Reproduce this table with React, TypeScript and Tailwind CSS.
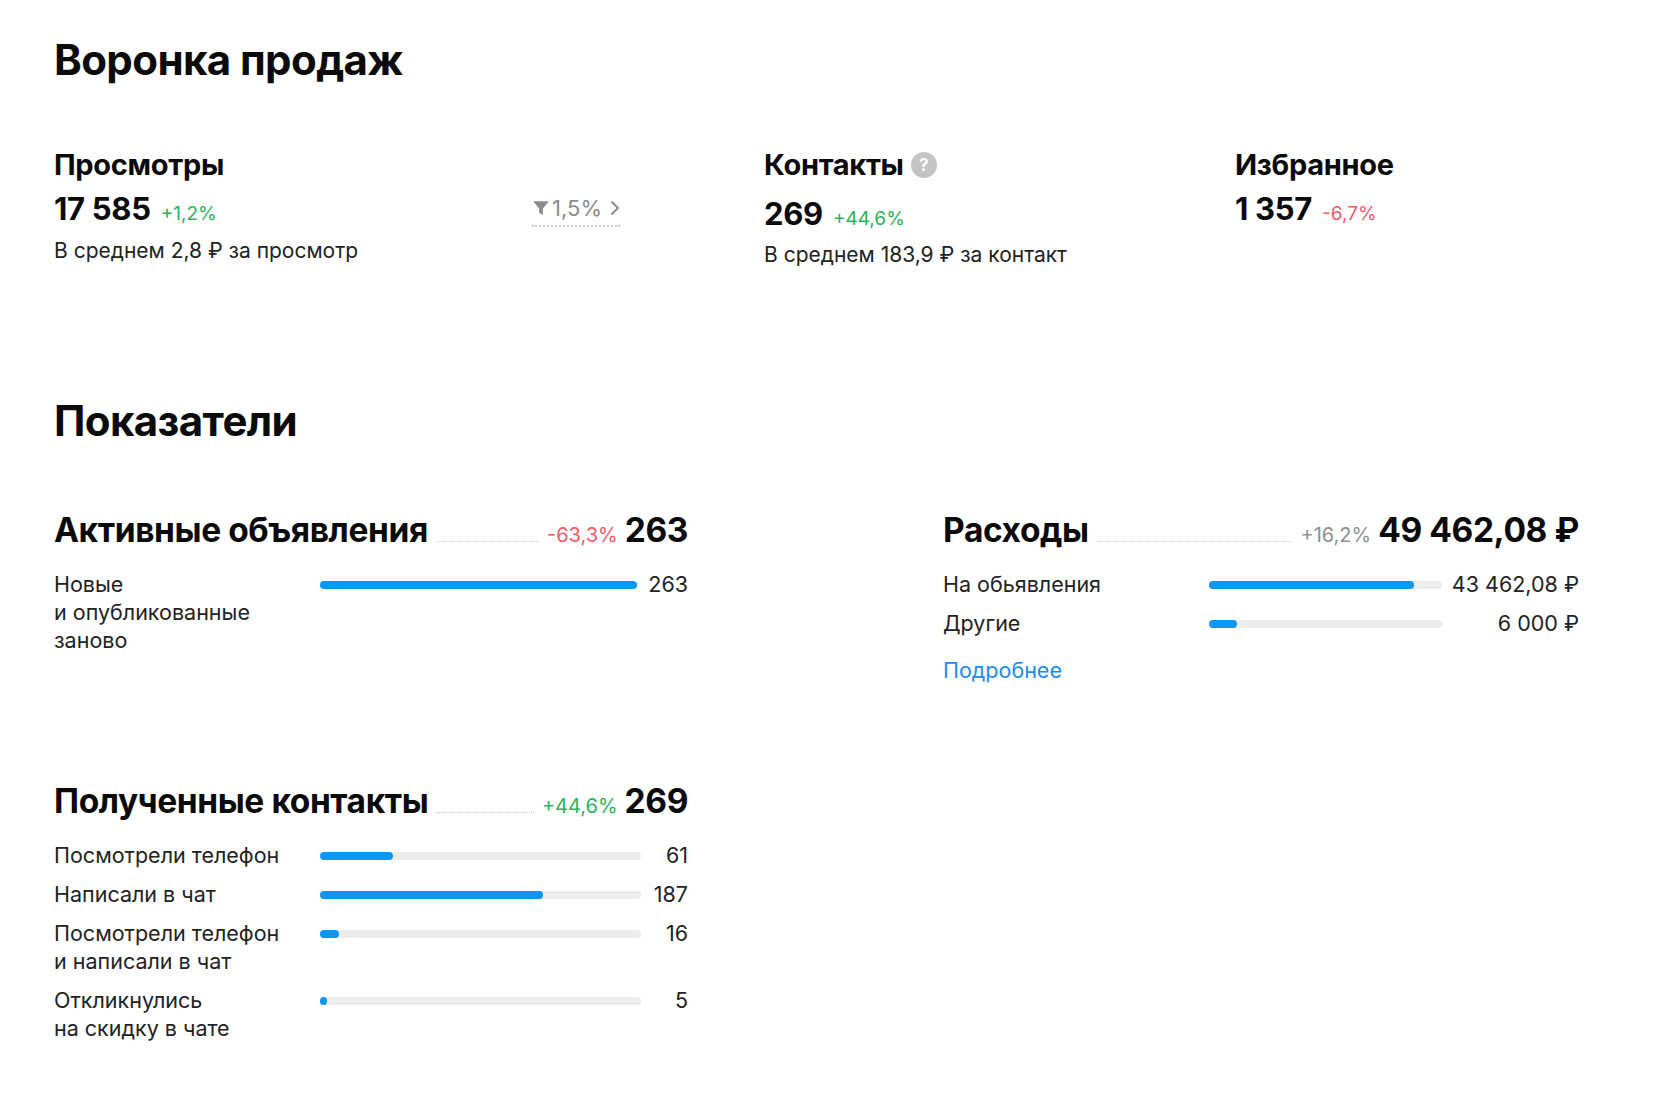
import type { ReactNode } from 'react';

const GREEN = 'text-[#2bb35c]';
const RED = 'text-[#f4596a]';

interface BarRow {
  label: ReactNode;
  value: string;
  percent: number;
}

interface BlockProps {
  title: string;
  delta: string;
  deltaClass: string;
  total: string;
  rows: BarRow[];
  valueWidth: string;
  footer?: ReactNode;
}

const FunnelIcon = () => (
  <svg viewBox="0 0 16 16" className="mr-[2px] h-[18px] w-[18px]" fill="#8c8c8c">
    <path d="M1 2h14L9.7 8.4v5.8L6.3 12.2V8.4z" />
  </svg>
);

const ChevronRight = () => (
  <svg viewBox="0 0 10 16" className="ml-[8px] h-[18px] w-[10px]" fill="none" stroke="#8c8c8c" strokeWidth="1.8" strokeLinecap="round" strokeLinejoin="round">
    <path d="M2 2l6 6-6 6" />
  </svg>
);

const HelpIcon = () => (
  <span className="ml-[7px] flex h-[26px] w-[26px] items-center justify-center rounded-full bg-[#c4c4c4] text-[17px] font-bold leading-none text-white">
    ?
  </span>
);

const Block = ({ title, delta, deltaClass, total, rows, valueWidth, footer }: BlockProps) => (
  <div>
    <div className="flex items-baseline">
      <h3 className="text-[33.5px] font-bold leading-[40px] tracking-[-0.4px]">{title}</h3>
      <div className="mx-[8px] flex-1 border-b border-dotted border-[#c9c9c9]" />
      <span className={`text-[20px] leading-none ${deltaClass}`}>{delta}</span>
      <span className="ml-[7px] text-[33.5px] font-bold leading-[40px] tracking-[-0.4px]">{total}</span>
    </div>
    <div className="mt-[20px] flex flex-col gap-[11px]">
      {rows.map((row, i) => (
        <div key={i} className="flex items-start text-[21.5px] leading-[28px] text-[#222]">
          <div className="w-[266px] shrink-0">{row.label}</div>
          <div className="mt-[11px] h-[8px] flex-1 rounded-full bg-[#ececec]">
            <div className="h-full rounded-full bg-[#0a96f5]" style={{ width: `${row.percent}%` }} />
          </div>
          <div className={`${valueWidth} shrink-0 text-right`}>{row.value}</div>
        </div>
      ))}
    </div>
    {footer}
  </div>
);

export default function App() {
  return (
    <div className="min-h-screen bg-white px-[54px] pt-[36px] font-[Inter,sans-serif] text-[#0a0a0a]">
      <h1 className="text-[42px] font-bold leading-[48px] tracking-[-0.6px]">Воронка продаж</h1>

      <div className="mt-[64px] flex">
        <div className="w-[710px]">
          <div className="text-[29px] font-bold leading-[34px] tracking-[-0.3px]">Просмотры</div>
          <div className="mt-[7px] flex w-[566px] items-end justify-between">
            <div className="flex items-baseline">
              <span className="text-[31px] font-bold leading-[40px] tracking-[-0.3px]">17 585</span>
              <span className={`ml-[10px] text-[19px] ${GREEN}`}>+1,2%</span>
            </div>
            <div className="mb-[2px] flex items-center border-b-2 border-dotted border-[#c9c9c9] pb-[4px] text-[22px] leading-[26px] text-[#8c8c8c]">
              <FunnelIcon />
              <span>1,5%</span>
              <ChevronRight />
            </div>
          </div>
          <div className="mt-[8px] text-[21px] leading-[28px] text-[#222]">В среднем 2,8 ₽ за просмотр</div>
        </div>

        <div className="w-[471px]">
          <div className="flex items-center text-[29px] font-bold leading-[34px] tracking-[-0.3px]">
            Контакты
            <HelpIcon />
          </div>
          <div className="mt-[12px] flex items-baseline">
            <span className="text-[31px] font-bold leading-[40px] tracking-[-0.3px]">269</span>
            <span className={`ml-[10px] text-[19px] ${GREEN}`}>+44,6%</span>
          </div>
          <div className="mt-[7px] text-[21px] leading-[28px] text-[#222]">В среднем 183,9 ₽ за контакт</div>
        </div>

        <div>
          <div className="text-[29px] font-bold leading-[34px] tracking-[-0.3px]">Избранное</div>
          <div className="mt-[7px] flex items-baseline">
            <span className="text-[31px] font-bold leading-[40px] tracking-[-0.3px]">1 357</span>
            <span className={`ml-[10px] text-[19px] ${RED}`}>-6,7%</span>
          </div>
        </div>
      </div>

      <h2 className="mt-[128px] text-[42px] font-bold leading-[48px] tracking-[-0.6px]">Показатели</h2>

      <div className="mt-[65px] grid grid-cols-[634px_636px] gap-x-[255px] gap-y-[97px]">
        <Block
          title="Активные объявления"
          delta="-63,3%"
          deltaClass={RED}
          total="263"
          valueWidth="w-[51px]"
          rows={[
            {
              label: (
                <>
                  Новые
                  <br />и опубликованные
                  <br />
                  заново
                </>
              ),
              value: '263',
              percent: 100,
            },
          ]}
        />
        <Block
          title="Расходы"
          delta="+16,2%"
          deltaClass="text-[#8f8f8f]"
          total="49 462,08 ₽"
          valueWidth="w-[137px]"
          rows={[
            { label: 'На обьявления', value: '43 462,08 ₽', percent: 87.9 },
            { label: 'Другие', value: '6 000 ₽', percent: 12.1 },
          ]}
          footer={
            <div className="mt-[19px] text-[21.5px] leading-[28px] text-[#1a8cf0]">Подробнее</div>
          }
        />
        <Block
          title="Полученные контакты"
          delta="+44,6%"
          deltaClass={GREEN}
          total="269"
          valueWidth="w-[47px]"
          rows={[
            { label: 'Посмотрели телефон', value: '61', percent: 22.7 },
            { label: 'Написали в чат', value: '187', percent: 69.5 },
            {
              label: (
                <>
                  Посмотрели телефон
                  <br />и написали в чат
                </>
              ),
              value: '16',
              percent: 6,
            },
            {
              label: (
                <>
                  Откликнулись
                  <br />
                  на скидку в чате
                </>
              ),
              value: '5',
              percent: 2.2,
            },
          ]}
        />
      </div>
    </div>
  );
}
